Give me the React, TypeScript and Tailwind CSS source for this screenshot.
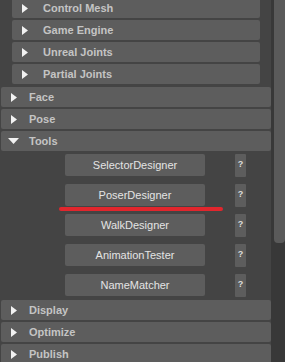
import React from "react";

const RightArrow = () => (
  <svg width="6" height="9" viewBox="0 0 6 9" className="block">
    <path d="M0 0 L6 4.5 L0 9 Z" fill="#f2f2f2" />
  </svg>
);

const DownArrow = () => (
  <svg width="11" height="6" viewBox="0 0 11 6" className="block">
    <path d="M0 0 L11 0 L5.5 6 Z" fill="#f2f2f2" />
  </svg>
);

function Header({
  label,
  open = false,
  nested = false,
  className = "",
}: {
  label: string;
  open?: boolean;
  nested?: boolean;
  className?: string;
}) {
  return (
    <div
      className={`flex h-[20px] shrink-0 items-center rounded-[2px] bg-[#5d5d5d] ${className}`}
    >
      {open ? (
        <span className="flex w-[28px] shrink-0 pl-[7px]">
          <DownArrow />
        </span>
      ) : (
        <span
          className={`flex shrink-0 pl-[10px] ${nested ? "w-[31px]" : "w-[28px]"}`}
        >
          <RightArrow />
        </span>
      )}
      <span className="text-[11px] font-bold leading-none text-[#c4c4c4]">
        {label}
      </span>
    </div>
  );
}

function ToolButton({ label }: { label: string }) {
  return (
    <div className="flex h-[22px] items-center pl-[64px]">
      <div className="flex h-[22px] w-[140px] items-center justify-center rounded-[2px] bg-[#5d5d5d] text-[11px] text-[#e4e4e4]">
        {label}
      </div>
      <div className="ml-[30px] flex h-[23px] w-[11px] items-center justify-center rounded-[1px] bg-[#5d5d5d] text-[9px] font-bold text-[#dcdcdc]">
        ?
      </div>
    </div>
  );
}

export default function App() {
  const tools = [
    "SelectorDesigner",
    "PoserDesigner",
    "WalkDesigner",
    "AnimationTester",
    "NameMatcher",
  ];

  return (
    <div className="relative flex h-[362px] w-[285px] overflow-hidden bg-[#444444] font-['Liberation_Sans',Arial,sans-serif]">
      <div className="mt-[-2px] flex w-[271px] shrink-0 flex-col gap-[2px] pl-[1px]">
        <div className="flex flex-col gap-[2px] px-[11px]">
          <Header label="Control Mesh" nested />
          <Header label="Game Engine" nested />
          <Header label="Unreal Joints" nested />
          <Header label="Partial Joints" nested />
        </div>
        <Header label="Face" className="mt-[1px]" />
        <Header label="Pose" />
        <Header label="Tools" open />
        <div className="flex flex-col gap-[8px] pb-[2px] pt-[1px]">
          {tools.map((t) => (
            <ToolButton key={t} label={t} />
          ))}
        </div>
        <Header label="Display" />
        <Header label="Optimize" />
        <Header label="Publish" />
      </div>

      {/* scrollbar */}
      <div className="flex h-full w-[14px] bg-[#383838]">
        <div className="ml-[3px] h-[243px] w-[11px] rounded-b-[4px] bg-[#5a5a5a]" />
      </div>

      {/* red annotation line */}
      <div className="absolute left-[59px] top-[207px] h-[4px] w-[164px] rounded-full bg-[#e1262d]" />
    </div>
  );
}
